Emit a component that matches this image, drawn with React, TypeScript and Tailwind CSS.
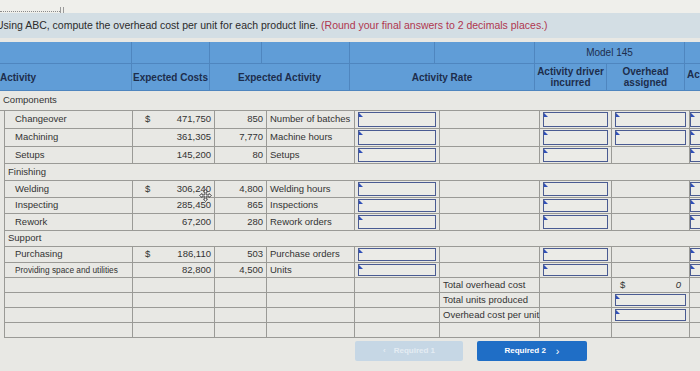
const cols = "grid grid-cols-[132px_78px_52px_88px_85px_100px_72px_78px_60px]";

type Row = {
  name: string;
  h: string;
  small?: boolean;
  dollar?: boolean;
  cost?: string;
  qty?: string;
  unit?: string;
  overheadInput?: boolean;
};

const groups: { label: string; h: string; rows: Row[] }[] = [
  {
    label: "Components",
    h: "h-[20px]",
    rows: [
      { name: "Changeover", h: "h-[18px]", dollar: true, cost: "471,750", qty: "850", unit: "Number of batches", overheadInput: true },
      { name: "Machining", h: "h-[18px]", cost: "361,305", qty: "7,770", unit: "Machine hours", overheadInput: true },
      { name: "Setups", h: "h-[17px]", cost: "145,200", qty: "80", unit: "Setups" },
    ],
  },
  {
    label: "Finishing",
    h: "h-[17px]",
    rows: [
      { name: "Welding", h: "h-[17px]", dollar: true, cost: "306,240", qty: "4,800", unit: "Welding hours" },
      { name: "Inspecting", h: "h-[16px]", cost: "285,450", qty: "865", unit: "Inspections" },
      { name: "Rework", h: "h-[17px]", cost: "67,200", qty: "280", unit: "Rework orders" },
    ],
  },
  {
    label: "Support",
    h: "h-[16px]",
    rows: [
      { name: "Purchasing", h: "h-[16px]", dollar: true, cost: "186,110", qty: "503", unit: "Purchase orders" },
      { name: "Providing space and utilities", h: "h-[15px]", small: true, cost: "82,800", qty: "4,500", unit: "Units" },
    ],
  },
];

function Input() {
  return (
    <div className="relative h-full w-full border-[1.5px] border-[#4a5b92] bg-[#ebebe7]">
      <div className="absolute left-0 top-0 h-0 w-0 border-l-[4px] border-t-[4px] border-l-[#2f4fb8] border-t-transparent" />
    </div>
  );
}

const cell = "border-r border-[#9a9a96] px-[3px] flex items-center";

export default function App() {
  return (
    <div className="relative h-[371px] w-[700px] overflow-hidden bg-[#e8e8e4] font-['Liberation_Sans',Arial,sans-serif] text-[#333]">
      {/* top strip */}
      <div className="relative h-[13px] bg-[#efefeb]">
        <div className="absolute left-0 top-[11px] w-[60px] border-t border-dotted border-[#8a8a8a]" />
        <div className="absolute left-[60px] top-[7px] h-[6px] w-[4px] border-x border-[#9a9a9a]" />
      </div>

      {/* instruction bar */}
      <div className="flex h-[25px] items-center bg-[#d3dee4] text-[10.5px] whitespace-nowrap text-[#2b2b2b]">
        <span className="-ml-[4px]">
          Using ABC, compute the overhead cost per unit for each product line.{" "}
          <span className="text-[#b0364f]">(Round your final answers to 2 decimals places.)</span>
        </span>
      </div>
      <div className="h-[4px]" />

      {/* header */}
      <div className="w-[745px] bg-[#609dd7] text-[10px] font-bold text-[#1d2d4c]">
        <div className={`${cols} h-[22px] border-b border-[#4f86bf]`}>
          <div className="border-r border-[#4f86bf]" />
          <div className="border-r border-[#4f86bf]" />
          <div className="border-r border-[#4f86bf]" />
          <div className="border-r border-[#4f86bf]" />
          <div className="border-r border-[#4f86bf]" />
          <div className="border-r border-[#4f86bf]" />
          <div className="col-span-2 flex items-center justify-center border-r border-[#4f86bf] font-normal text-[#1d2d4c]">
            Model 145
          </div>
          <div />
        </div>
        <div className={`${cols} h-[27px] border-b border-[#4f86bf]`}>
          <div className="flex items-center border-r border-[#4f86bf]">Activity</div>
          <div className="flex items-center justify-center border-r border-[#4f86bf]">Expected Costs</div>
          <div className="col-span-2 flex items-center justify-center border-r border-[#4f86bf]">Expected Activity</div>
          <div className="col-span-2 flex items-center justify-center border-r border-[#4f86bf]">Activity Rate</div>
          <div className="flex items-center justify-center border-r border-[#4f86bf] text-center leading-[11px]">
            Activity driver
            <br />
            incurred
          </div>
          <div className="flex items-center justify-center border-r border-[#4f86bf] text-center leading-[11px]">
            Overhead
            <br />
            assigned
          </div>
          <div className="flex items-start pl-[2px] pt-[3px]">Ac</div>
        </div>
      </div>

      {/* body */}
      <div className="w-[745px] text-[9.5px]">
        {groups.map((g, gi) => (
          <div key={g.label}>
            <div
              className={`${g.h} flex items-center ${
                gi === 0 ? "pl-[3px]" : "ml-[4px] border-l border-[#9a9a96] pl-[3px]"
              } border-b border-[#9a9a96]`}
            >
              {g.label}
            </div>
            {g.rows.map((r) => (
              <div key={r.name} className={`${cols} ${r.h} ml-[4px] border-b border-l border-[#9a9a96]`}>
                <div className={`${cell} w-[128px] pl-[10px] whitespace-nowrap ${r.small ? "text-[8.3px]" : ""}`}>
                  {r.name}
                </div>
                <div className={`${cell} justify-between -ml-[4px] pl-[12px]`}>
                  <span>{r.dollar ? "$" : ""}</span>
                  <span>{r.cost}</span>
                </div>
                <div className={`${cell} justify-end`}>{r.qty}</div>
                <div className={`${cell} whitespace-nowrap`}>{r.unit}</div>
                <div className={`${cell} px-[3px] py-[1px]`}>
                  <Input />
                </div>
                <div className={cell} />
                <div className={`${cell} px-0 py-[1px]`}>
                  <Input />
                </div>
                <div className={`${cell} px-0 py-[1px]`}>{r.overheadInput && <Input />}</div>
                <div className="flex items-center py-[1px]">
                  <Input />
                </div>
              </div>
            ))}
          </div>
        ))}

        {/* totals */}
        {[
          { label: "Total overhead cost", kind: "total" },
          { label: "Total units produced", kind: "input" },
          { label: "Overhead cost per unit", kind: "input" },
          { label: "", kind: "none" },
        ].map((t, i) => (
          <div key={i} className={`${cols} ml-[4px] h-[15px] border-b border-l border-[#9a9a96]`}>
            <div className={`${cell} w-[128px]`} />
            <div className={`${cell} -ml-[4px]`} />
            <div className={cell} />
            <div className={cell} />
            <div className={cell} />
            <div className={`${cell} whitespace-nowrap`}>{t.label}</div>
            <div className={cell} />
            <div className={`${cell} ${t.kind === "total" ? "justify-between px-[8px]" : "px-0 py-[1px]"}`}>
              {t.kind === "total" && (
                <>
                  <span>$</span>
                  <span className="italic">0</span>
                </>
              )}
              {t.kind === "input" && <Input />}
            </div>
            <div />
          </div>
        ))}
      </div>

      {/* nav buttons */}
      <div className="mt-[3px] flex gap-[14px] pl-[355px]">
        <div className="flex h-[20px] w-[108px] items-center justify-center gap-[8px] rounded-[2px] bg-[#c6d7e5] text-[8px] font-bold text-[#e4ecf3]">
          <span>‹</span>
          <span>Required 1</span>
        </div>
        <div className="flex h-[20px] w-[110px] items-center justify-center gap-[10px] rounded-[2px] bg-[#1f6ec6] text-[8px] font-bold text-white">
          <span>Required 2</span>
          <span className="text-[11px] font-normal">›</span>
        </div>
      </div>

      {/* cursor */}
      <svg className="absolute left-[199px] top-[189px]" width="13" height="13" viewBox="0 0 13 13">
        <path d="M6.5 0.5 L4.5 3 H5.8 V5.8 H3 V4.5 L0.5 6.5 L3 8.5 V7.2 H5.8 V10 H4.5 L6.5 12.5 L8.5 10 H7.2 V7.2 H10 V8.5 L12.5 6.5 L10 4.5 V5.8 H7.2 V3 H8.5 Z" fill="#fff" stroke="#333" strokeWidth="0.8" />
      </svg>
    </div>
  );
}
